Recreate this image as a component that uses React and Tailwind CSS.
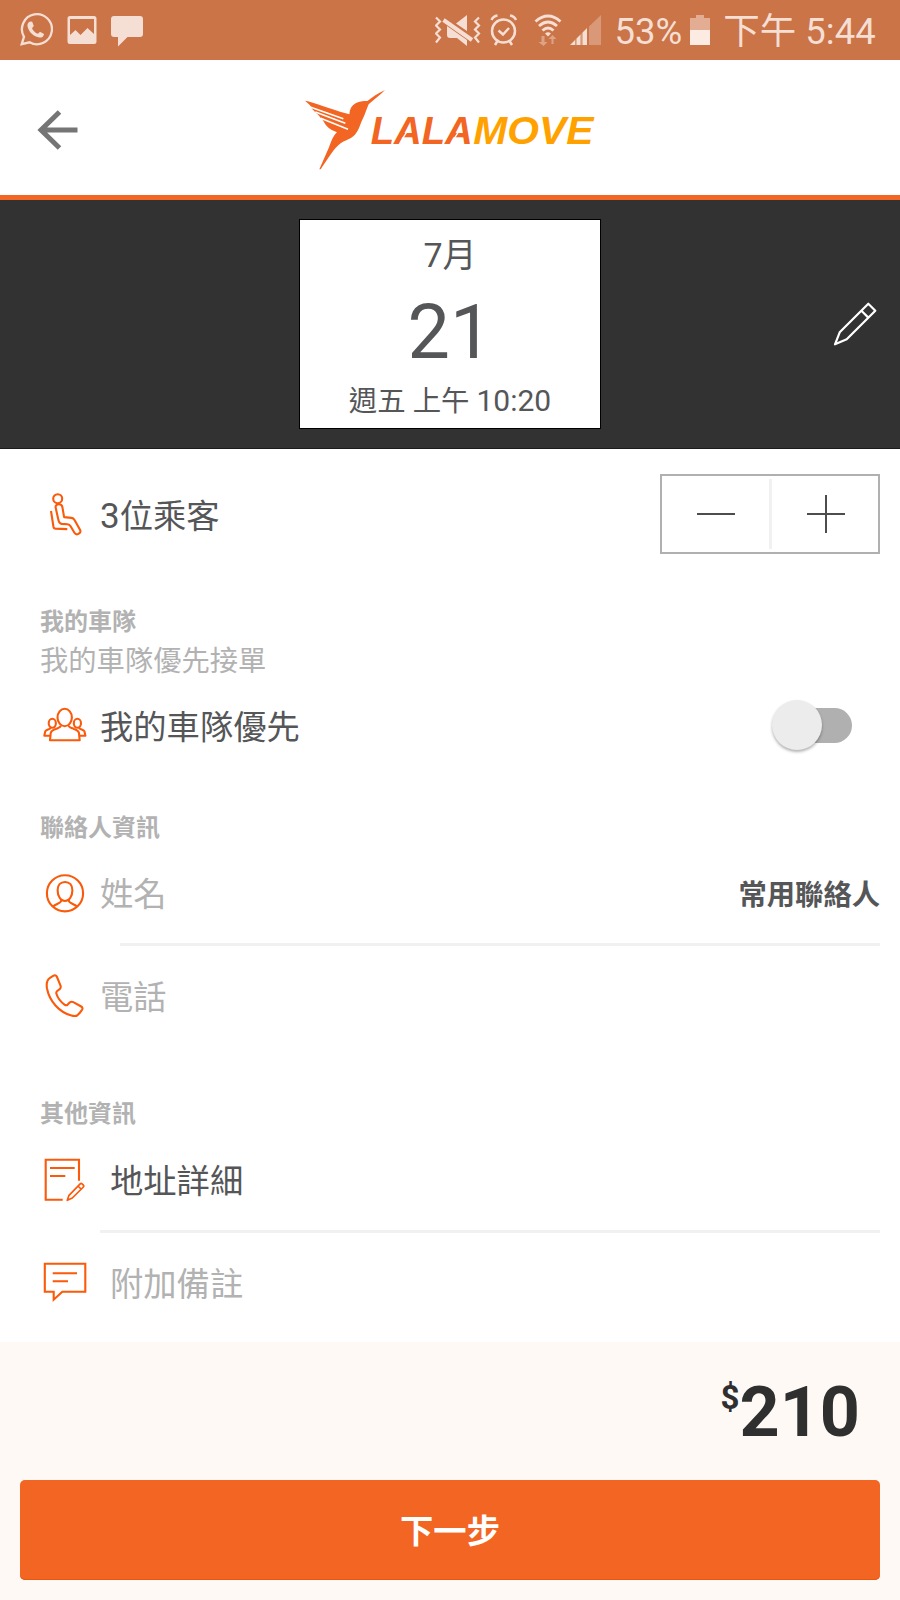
import React, { useState } from "react";

const LineIcon = ({ children }) => (
  <svg
    className="ml-[43px] size-11 shrink-0"
    viewBox="0 0 44 44"
    fill="none"
    stroke="#fa5a0a"
    strokeWidth="2.1"
    strokeLinejoin="round"
  >
    {children}
  </svg>
);

const PassengerIcon = () => (
  <LineIcon>
    <circle cx="14.7" cy="6.7" r="4.5" />
    <path d="M16 12.2c-2.4 0-3.8 1.5-3.3 3.6l2.5 11.2c.5 3 1.2 4.6 3.6 4.9l5.8.3c1.5.1 2.2.7 3 2l3.7 6.3c1 1.7 2.6 2.2 4.2 1.3 1.9-1 2.4-2.3 1.5-4l-5.3-9.6c-.9-1.5-1.6-2.1-3.3-2.3l-7.3-.8-1.7-10c-.3-1.8-1.5-2.9-3.4-2.9z" />
    <path d="M8 19l2.5 16c.2 1.1.8 1.5 1.8 1.6l12 .5" />
  </LineIcon>
);

const TeamIcon = () => (
  <LineIcon>
    <ellipse cx="21.7" cy="14.5" rx="7.2" ry="8.7" />
    <path d="M17.7 22.5c0 2-2 2.3-5 3.5-3.5 1.3-4.7 2-5 4.2L7 37.3h29.7L36 30.2c-.3-2.2-1.5-2.9-5-4.2-3-1.2-5.3-1.5-5.3-3.5" />
    <ellipse cx="9.3" cy="20.3" rx="3.6" ry="4.5" />
    <ellipse cx="34.4" cy="20.3" rx="3.6" ry="4.5" />
    <path d="M7.7 24.5c0 2-5 2-5.5 4l-.9 4.2H7M36 24.500c0 2 5 2 5.5 4l.9 4.2h-5.700" />
  </LineIcon>
);

const PersonIcon = () => (
  <LineIcon>
    <circle cx="22" cy="22.3" r="18.1" />
    <path d="M22 11c-4.6 0-7.4 3.2-7.4 8.2 0 5.6 3 10.8 7.4 10.8s7.4-5.2 7.4-10.800c0-5-2.800-8.200-7.400-8.200z" />
    <path d="M18.700 28.500c-.3 4-5 4-8.600 7M25.300 28.500c.3 4 5 4 8.600 7" />
  </LineIcon>
);

const PhoneIcon = () => (
  <LineIcon>
    <path d="M7 3.9l3.5-2.2c1.6-.8 2.8-.3 3.5 1.3l3.5 8.7c.5 1.5.3 2.5-.8 3.4l-2.5 1.9c-1 .8-1.2 1.6-.7 3 1.2 3.8 4.3 7.9 8 10.6 1.3.9 2.2.9 3.2 0l2-2c1.2-1.1 2.2-1.2 3.6-.5l7.9 4.4c1.4.8 1.7 1.9.8 3.3-1.5 2.2-2.8 3.8-4.4 5.3-1.5 1.3-3.2 1.3-6.2.5C16 38 6.5 27.2 4 14.500c-.8-4.800-.6-8.200 3-10.600z" />
  </LineIcon>
);

const AddressIcon = () => (
  <LineIcon>
    <path strokeLinejoin="miter" d="M19.7 41.7h-17v-40H36v21M7 10h24.7M7 18h15.3" />
    <path d="M24.3 42.3l1.7-5 11.2-11.5c.6-.6 1.2-.6 1.8 0l1.4 1.4c.6.6.6 1.2 0 1.8L29.3 40zM35 28l3 3" strokeWidth="1.7" />
  </LineIcon>
);

const NoteIcon = () => (
  <LineIcon>
    <path strokeLinejoin="miter" d="M1.8 3.7h40.5v28h-23l-8.6 8v-8H1.8zM9.7 13.3H34M9.7 21.3H25" />
  </LineIcon>
);

const Logo = () => (
  <svg className="h-[90px] w-[300px]" viewBox="30 45 900 270">
    <path
      fill="#f26522"
      d="M285 60C262 70 245 84 232 93C205 93 180 100 178 133L150 125C110 112 75 98 45 92L60 106L67 118L85 135L100 153Q112 178 141 187C128 199 124 214 117 232L88 298L92 298C112 270 133 232 152 220C168 209 183 207 194 195C208 180 210 162 218 147C226 132 229 118 236 103C252 88 270 76 285 60Z"
    />
    {/* gaps between the feathers */}
    <path stroke="#fff" strokeWidth="5" d="M58 110L160 146M76 126L166 160M92 145L174 178" />
    <g
      fontFamily="Liberation Sans, Arial, sans-serif"
      fontSize="118"
      fontWeight="700"
      fontStyle="italic"
    >
      <text x="242" y="221" textLength="306" lengthAdjust="spacingAndGlyphs" fill="#f26522">
        LALA
      </text>
      <text x="550" y="221" textLength="360" lengthAdjust="spacingAndGlyphs" fill="#ffa200">
        MOVE
      </text>
    </g>
    <path stroke="#fff" strokeWidth="4" d="M338 205L357 175M493 205L512 175" />
  </svg>
);

const StatusBar = () => (
  <div className="flex h-[60px] items-center bg-[#ca7447] pl-5 text-[36.5px] leading-[60px] text-[#f5ded3]">
    <svg className="h-[34px] w-[33px]" viewBox="0 0 33 34" fill="none">
      <path d="M1.7 31.2l2.3-7.4A15 15 0 1 1 9.6 29.3z" stroke="#f5ded3" strokeWidth="2.3" />
      <path
        d="M10.5 8.5c-2 .4-3.4 2.2-3 4.8 1 5.7 6.5 10.6 12 11.2 2.5.2 4.3-1 4.5-3.6l-4-2.1-2 2c-2.8-1-5-3.2-6-5.6l1.8-2.2-1.6-4.3z"
        fill="#f5ded3"
      />
    </svg>
    <svg className="ml-[14px] h-[30px] w-[30px]" viewBox="0 0 30 30" fill="#f5ded3">
      <path
        fillRule="evenodd"
        d="M3 1h24q2.500 0 2.500 2.500v23q0 2.500-2.500 2.500H3Q.5 29 .5 26.500v-23Q.5 1 3 1zM3 4v16l5.500-5 5 5 7-7 6.500 6V4z"
      />
    </svg>
    <svg className="mt-[2px] ml-[14px] h-[34px] w-[32px]" viewBox="0 0 32 34" fill="#f5ded3">
      <path d="M3 2h26q3 0 3 3v15q0 3-3 3H16.500L7 32.500V23H3q-3 0-3-3V5q0-3 3-3z" />
    </svg>

    <svg className="ml-[292px] h-8 w-[46px]" viewBox="0 0 46 32" fill="none" stroke="#f5ded3" strokeWidth="2.2">
      <path d="M1 3.5l4 4-4 4 4 4-4 4 4 4-4 5M44 3.5l-4 4 4 4-4 4 4 4-4 4 4 5" />
      <path d="M32 1v16L21 9.5zM12 12l20 14v6l-10-8h-7q-3 0-3-3z" fill="#f5ded3" stroke="none" />
      <path d="M8.5 6L37 26" strokeWidth="4" />
    </svg>
    <svg className="ml-[9px] h-8 w-7" viewBox="0 0 28 32" fill="none" stroke="#f5ded3" strokeWidth="2.5">
      <circle cx="13.5" cy="17" r="11.5" />
      <path d="M8.5 16.5l4.500 4L19 14M1.500 6C2.500 3.500 5 1.800 7.500 1.500M26 6C25 3.500 22.500 1.800 20 1.500M7.500 27l-2.500 4M19.500 27l2.500 4" />
    </svg>
    <svg className="ml-[16px] h-8 w-[28px]" viewBox="0 0 28 32" fill="none" stroke="#f5ded3" strokeWidth="2.9">
      <path d="M1.5 7.5q12.5-11 25 0M5 12q9-8 18 0M8.5 16.5q5.5-5 11 0" />
      <path d="M11 19.5q3-2.500 6 0l-3 3z" fill="#f5ded3" stroke="none" />
      <path d="M7.5 22v6h-3l5 4 4-4h-3v-6zM17.5 30v-5h-3l4-4 4 4h-3v5z" fill="#f5ded3" stroke="none" opacity=".45" />
    </svg>
    <svg className="ml-[8px] h-[30px] w-[31px]" viewBox="0 0 31 30" fill="#f5ded3">
      <path d="M0 30h5v-5zM6.5 30h4V19.5l-4 4zM12.5 30h4.5V13l-4.5 4.5z" />
      <path d="M5 30V25l1.5-1.5V30zM10.5 30V19.5l2-2V30zM19 30V11.5L31 0v30z" opacity=".35" />
    </svg>
    <span className="mt-[3px] ml-[13.5px]">53%</span>
    <svg className="ml-[8px] h-[30px] w-5" viewBox="0 0 20 30">
      <path d="M6 0h8v3h6v12H0V3h6z" fill="#e2ad92" />
      <path d="M0 15h20v15H0z" fill="#fbebe2" />
    </svg>
    <span className="mt-[3px] ml-[13px] whitespace-nowrap">下午 5:44</span>
  </div>
);

const Section = ({ children }) => (
  <h2 className="pl-10 text-[24px] leading-9 font-bold text-[#b2b2b2]">{children}</h2>
);

export default function App() {
  const [passengers, setPassengers] = useState(3);

  return (
    <div className="flex h-[1600px] w-[900px] flex-col overflow-hidden bg-white font-['Roboto','Noto_Sans_CJK_TC',sans-serif] text-[33.3px] text-[#555658]">
      <StatusBar />

      <header className="flex h-[140px] items-center border-b-[5px] border-[#f26522] pl-[35px]">
        <svg className="mt-[5px] size-11" viewBox="0 0 44 44" fill="none" stroke="#757575" strokeWidth="5">
          <path d="M24.5 4L6 22l18.5 18M6 22h36.5" />
        </svg>
        <div className="mt-[5px] ml-[221px]">
          <Logo />
        </div>
      </header>

      {/* Pickup time */}
      <div className="flex h-[249px] items-center border-b border-[#1c1a1c] bg-[#323232]">
        <div className="ml-[299px] flex h-[210px] w-[302px] flex-col items-center border border-black bg-white">
          <div className="mt-[10px] text-[34px] leading-[50px]">7月</div>
          <div className="mt-[10px] text-[75.5px] leading-[84px]">21</div>
          <div className="mt-[7px] text-[28.4px] leading-[40px]">
            週五 上午 <span className="text-[30px]">10:20</span>
          </div>
        </div>
        <svg
          className="ml-[231px] size-[46px]"
          viewBox="0 0 46 46"
          fill="none"
          stroke="#fff"
          strokeWidth="2.2"
          strokeLinejoin="round"
        >
          <path d="M3 43.3l4.7-12L36.3 2.7l7 7L14.7 38.3zM29.7 10l6.6 6.6" />
        </svg>
      </div>

      <div className="mt-[25px] flex h-20 items-center">
        <PassengerIcon />
        <span className="mt-[6px] ml-[13px] grow">
          <span className="text-[35px]">{passengers}</span>位乘客
        </span>
        <div className="mr-5 flex h-20 w-[220px] items-center border-[2.5px] border-[#b0b0b0]">
          <button
            type="button"
            onClick={() => setPassengers(Math.max(1, passengers - 1))}
            className="flex w-[107px] justify-center"
          >
            <svg className="h-[38px] w-[38px]" viewBox="0 0 38 38" stroke="#4d4d4d" strokeWidth="2">
              <path d="M0 19h38" />
            </svg>
          </button>
          <div className="h-[70px] w-[3px] bg-[#f1f1f1]"></div>
          <button
            type="button"
            onClick={() => setPassengers(passengers + 1)}
            className="flex flex-1 justify-center pl-[2px]"
          >
            <svg className="h-[38px] w-[38px]" viewBox="0 0 38 38" stroke="#4d4d4d" strokeWidth="2">
              <path d="M0 19h38M19 0v38" />
            </svg>
          </button>
        </div>
      </div>

      <div className="mt-[50px]">
        <Section>我的車隊</Section>
      </div>
      <p className="mt-[2px] pl-10 text-[28.3px] leading-10 text-[#b2b2b2]">我的車隊優先接單</p>
      <div className="mt-[13px] flex h-[60px] items-center">
        <TeamIcon />
        <span className="mt-[5px] ml-[13px] grow">我的車隊優先</span>
        <div className="mr-12 flex h-[35px] w-[75px] items-center rounded-full bg-[#b0b0b0]">
          <div className="-ml-[5px] size-[50px] shrink-0 rounded-full bg-[#ececec] shadow-[0_2px_3px_rgba(0,0,0,0.3)]"></div>
        </div>
      </div>

      <div className="mt-[55px]">
        <Section>聯絡人資訊</Section>
      </div>
      <div className="flex h-[97px] items-center pb-[3px]">
        <PersonIcon />
        <span className="mt-[4px] ml-[13px] grow text-[#b2b2b2]">姓名</span>
        <span className="mt-[6px] mr-5 text-[28.3px] font-bold">常用聯絡人</span>
      </div>
      <div className="mr-5 ml-[120px] h-[3px] bg-[#f1f1f1]"></div>
      <div className="flex h-[101px] items-center pb-[2px]">
        <PhoneIcon />
        <span className="mt-[5px] ml-[13px] text-[#b2b2b2]">電話</span>
      </div>

      <div className="mt-[49px]">
        <Section>其他資訊</Section>
      </div>
      <div className="flex h-[98px] items-center pb-[2px]">
        <AddressIcon />
        <span className="mt-[4px] ml-[23px]">地址詳細</span>
      </div>
      <div className="mr-5 ml-[100px] h-[3px] bg-[#f1f1f1]"></div>
      <div className="flex h-[99px] items-center pb-[2px]">
        <NoteIcon />
        <span className="mt-[6px] ml-[23px] text-[#b2b2b2]">附加備註</span>
      </div>

      <footer className="mt-auto h-[258px] shrink-0 bg-[#fff9f6] px-5">
        <div className="flex h-[138px] items-start justify-end pt-[29px] pr-5 font-bold text-[#2f2f2f]">
          <span className="mt-[7px] text-[33px] leading-[40px]">$</span>
          <span className="text-[70px] leading-[82px]">210</span>
        </div>
        <button
          type="button"
          className="h-[100px] w-full rounded-[5px] bg-[#f26522] pt-[4px] font-bold text-white shadow-[inset_0_-1px_0_#e8570f]"
        >
          下一步
        </button>
      </footer>
    </div>
  );
}
